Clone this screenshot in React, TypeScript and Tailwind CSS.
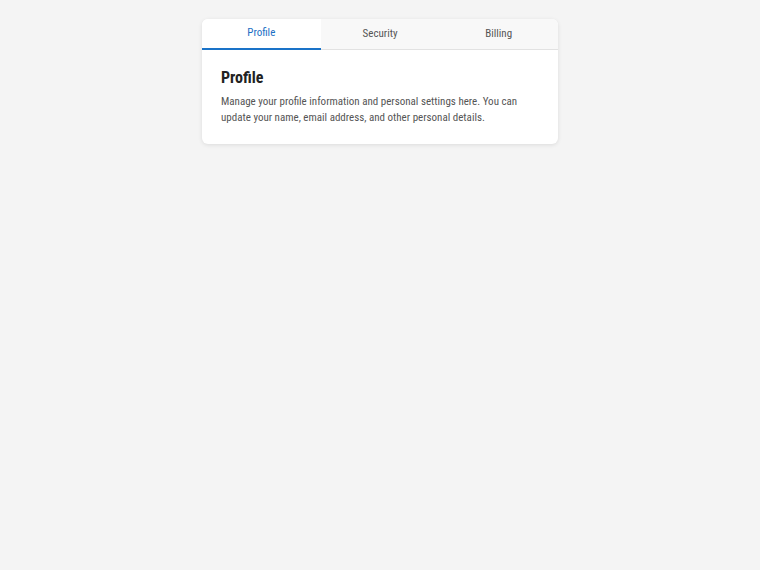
import React, { useState } from "react";

const tabs = ["Profile", "Security", "Billing"];

export default function App() {
  const [active, setActive] = useState("Profile");
  return (
    <div
      className="min-h-[570px] w-full bg-[#f4f4f4] pt-[19px]"
      style={{ fontFamily: '"Roboto Condensed", "Liberation Sans", Arial, sans-serif' }}
    >
      <div className="mx-auto w-[356px] overflow-hidden rounded-[6px] bg-white shadow-[0_1px_4px_rgba(0,0,0,0.1)]">
        <div className="flex border-b border-[#e2e2e2] bg-[#f8f8f8]">
          {tabs.map((t) => {
            const on = t === active;
            return (
              <button
                key={t}
                onClick={() => setActive(t)}
                className={
                  on
                    ? "-mb-px flex h-[31px] flex-1 items-center justify-center border-b-2 border-[#1a73c8] bg-white text-[11px] text-[#1a6fc4]"
                    : "flex h-[30px] flex-1 items-center justify-center text-[11px] text-[#555555]"
                }
              >
                {t}
              </button>
            );
          })}
        </div>
        <div className="px-[19px] pt-[18px] pb-[18px]">
          <h2 className="text-[16px] font-bold leading-[20px] text-[#222222]">{active}</h2>
          <p className="mt-[6px] text-[11px] leading-[16px] text-[#555555]">
            Manage your profile information and personal settings here. You can update your name, email address, and other personal details.
          </p>
        </div>
      </div>
    </div>
  );
}
